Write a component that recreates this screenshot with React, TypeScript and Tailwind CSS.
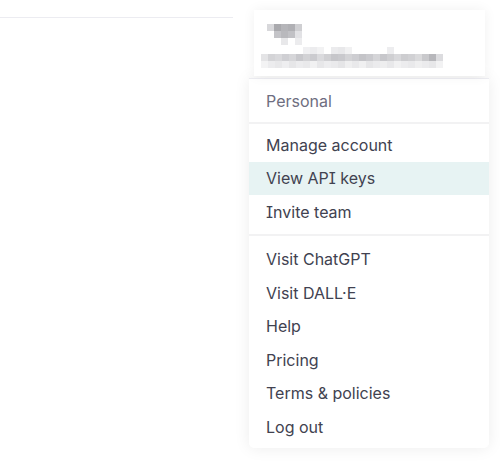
import React from 'react';

const sections: { label: string; highlight?: boolean }[][] = [
  [{ label: 'Manage account' }, { label: 'View API keys', highlight: true }, { label: 'Invite team' }],
  [
    { label: 'Visit ChatGPT' },
    { label: 'Visit DALL·E' },
    { label: 'Help' },
    { label: 'Pricing' },
    { label: 'Terms & policies' },
    { label: 'Log out' },
  ],
];

// pixelated (redacted) name + email
const nameRows = [
  ['#d8d8db', '#a9a9ad', '#b5b5b9', '#b0b0b4', '#cfcfd2'],
  ['#ffffff', '#c4c4c8', '#b9b9bd', '#c1c1c5', '#e2e2e5'],
  ['#ffffff', '#ffffff', '#e8e8ea', '#ffffff', '#ececee'],
];
const emailRows = [
  ['#fff', '#fff', '#fff', '#fff', '#fff', '#fff', '#f0f0f2', '#ececee', '#f2f2f3', '#fff', '#ebebed', '#e8e8ea', '#f1f1f2', '#fff', '#fff', '#fff', '#fff', '#fff', '#ededef', '#fff', '#fff', '#fff', '#fff', '#fff', '#fff', '#fff'],
  ['#e4e4e6', '#d4d4d7', '#d9d9dc', '#cfcfd3', '#d6d6d9', '#c8c8cc', '#d2d2d5', '#cbcbcf', '#dadadd', '#d0d0d3', '#c6c6ca', '#c9c9cd', '#d3d3d6', '#cdcdd1', '#c4c4c8', '#cacace', '#d5d5d8', '#c7c7cb', '#cfcfd2', '#d8d8db', '#cdcdd0', '#d1d1d4', '#dadadc', '#c9c9cc', '#b7b7bb', '#dcdcdf'],
  ['#f3f3f4', '#ececee', '#e8e8ea', '#eeeef0', '#e6e6e8', '#ececee', '#e9e9eb', '#f1f1f2', '#e7e7e9', '#ededef', '#eaeaec', '#e5e5e7', '#efeff0', '#e9e9eb', '#f0f0f1', '#e6e6e8', '#ebebed', '#eeeeef', '#e8e8ea', '#f1f1f2', '#ececee', '#e9e9eb', '#efeff0', '#ebebed', '#e7e7e9', '#f2f2f3'],
];

export default function App() {
  return (
    <div
      className="relative w-[500px] h-[461px] bg-white overflow-hidden [font-feature-settings:'cv08']"
      style={{ fontFamily: 'Inter, "Noto Sans", sans-serif' }}
    >
      {/* top bar line */}
      <div className="w-[233px] h-[18px] border-b border-[#ececf1]" />

      {/* account trigger */}
      <div className="absolute left-[254px] top-[10px] w-[231px] h-[66px] bg-white shadow-[0_0_12px_rgba(0,0,0,0.06)] z-10">
        <div className="flex flex-col pl-[13px] pt-[14px] blur-[0.6px]">
          {nameRows.map((row, i) => (
            <div key={i} className="flex">
              {row.map((c, j) => (
                <div key={j} className="w-[7px] h-[7px]" style={{ backgroundColor: c }} />
              ))}
            </div>
          ))}
        </div>
        <div className="flex flex-col pl-[7px] pt-[2px] blur-[0.6px]">
          {emailRows.map((row, i) => (
            <div key={i} className="flex">
              {row.map((c, j) => (
                <div key={j} className="w-[7px] h-[7px]" style={{ backgroundColor: c }} />
              ))}
            </div>
          ))}
        </div>
      </div>

      {/* dropdown menu */}
      <div className="absolute left-[249px] top-[78px] w-[240px] h-[370px] bg-white rounded-b-[5px] border-t border-[#ececf1] shadow-[0_0_16px_rgba(0,0,0,0.08)] text-base text-[#414250]">
        <div className="pt-[5px] pb-[4px] border-b-2 border-[#f2f2f3]">
          <div className="h-[34px] flex items-center px-[17px] text-[#6e6e80]">Personal</div>
        </div>
        <div className="pt-[4px] pb-[5px] border-b-2 border-[#f2f2f3]">
          {sections[0].map((item) => (
            <div
              key={item.label}
              className={`h-[33.5px] flex items-center px-[17px] ${item.highlight ? 'bg-[#e7f3f3]' : ''}`}
            >
              {item.label}
            </div>
          ))}
        </div>
        <div className="pt-[7px]">
          {sections[1].map((item) => (
            <div key={item.label} className="h-[33.5px] flex items-center px-[17px]">
              {item.label}
            </div>
          ))}
        </div>
      </div>
    </div>
  );
}
